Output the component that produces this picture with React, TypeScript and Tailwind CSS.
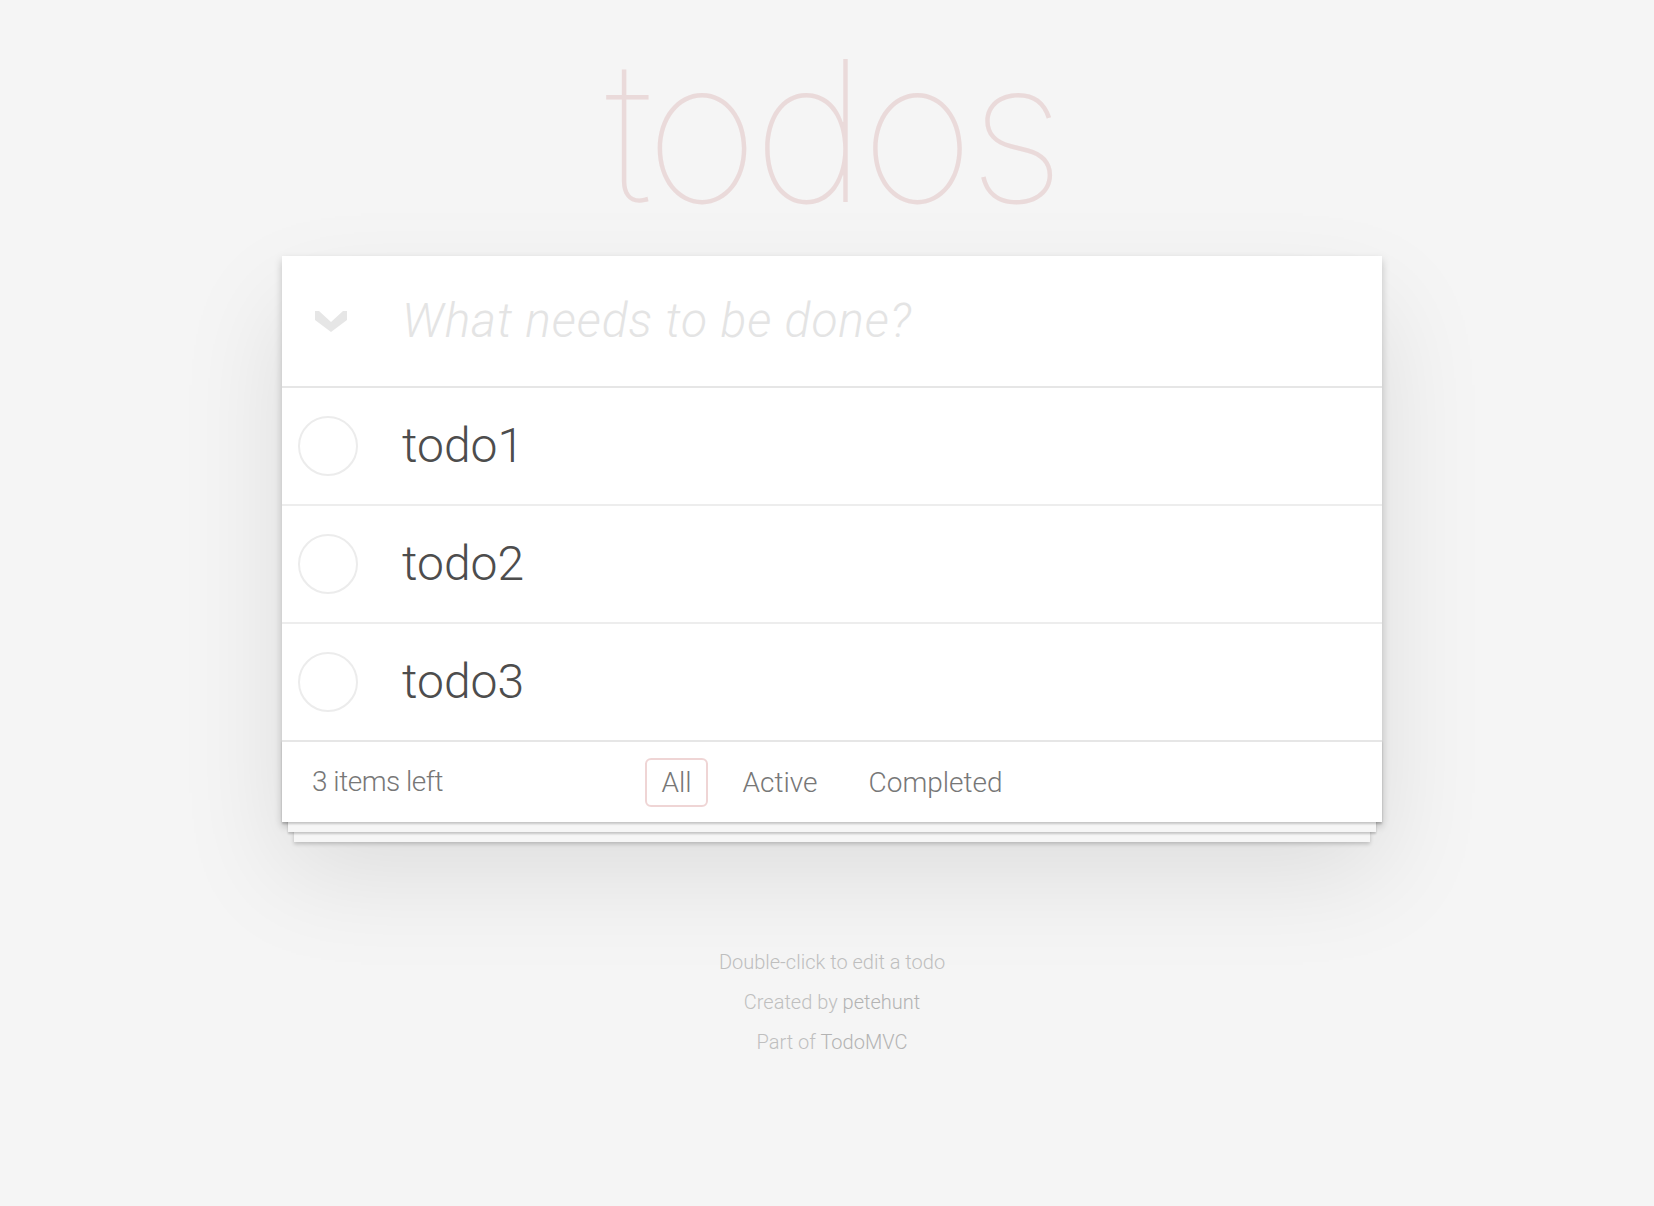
const todos = ["todo1", "todo2", "todo3"];
const filters = ["All", "Active", "Completed"];

function ToggleAll() {
  return (
    <svg width="32" height="21" viewBox="0 0 32 21" className="block">
      <polygon points="0,0 4,0 16,11 28,0 32,0 32,9 16,21 0,9" fill="#e6e6e6" />
    </svg>
  );
}

function Circle() {
  return (
    <svg width="60" height="60" viewBox="0 0 60 60" className="block shrink-0">
      <circle cx="30" cy="30" r="29" fill="none" stroke="#ececec" strokeWidth="2" />
    </svg>
  );
}

export default function App() {
  return (
    <div className="min-h-screen bg-[#f5f5f5] font-['Roboto','Helvetica_Neue',Arial,sans-serif] font-light text-[#4d4d4d]">
      <div className="ml-[282px] w-[1100px] pt-[33px]">
        <h1 className="h-[196px] text-center font-['Inter',sans-serif] text-[196px] leading-[196px] font-thin tracking-[-6px] text-[#eadada]">
          todos
        </h1>

        <section className="relative mt-[27px] bg-white shadow-[0_4px_8px_0_rgba(0,0,0,0.2),0_50px_100px_0_rgba(0,0,0,0.1)]">
          <header className="flex h-[132px] items-center border-b-2 border-[#e6e6e6]">
            <div className="w-[120px] pl-[33px]">
              <ToggleAll />
            </div>
            <input
              placeholder="What needs to be done?"
              className="flex-1 bg-transparent pr-[32px] text-[48px] italic tracking-[0.9px] outline-none placeholder:text-[#e4e4e4]"
            />
          </header>

          <ul>
            {todos.map((t, i) => (
              <li
                key={t}
                className={`flex items-center ${i < todos.length - 1 ? "h-[118px] border-b-2 border-[#ededed]" : "h-[116px]"}`}
              >
                <div className="w-[120px] pl-[16px]">
                  <Circle />
                </div>
                <label className="text-[48px] leading-[1.2] text-[#4d4d4d]">{t}</label>
              </li>
            ))}
          </ul>

          <footer className="relative flex h-[82px] items-center border-t-2 border-[#e6e6e6] px-[30px] text-[28px] text-[#777] shadow-[0_2px_2px_rgba(0,0,0,0.2),0_16px_0_-6px_#f6f6f6,0_18px_2px_-6px_rgba(0,0,0,0.2),0_32px_0_-12px_#f6f6f6,0_34px_4px_-12px_rgba(0,0,0,0.2)]">
            <span className="tracking-[-0.5px]">3 items left</span>
            <ul className="absolute inset-x-0 flex justify-center gap-[7px]">
              {filters.map(f => (
                <li key={f} className="mx-[6px]">
                  <a
                    className={`block rounded-[6px] border-2 px-[14px] py-[6px] leading-[33px] ${
                      f === "All" ? "border-[rgba(175,47,47,0.2)]" : "border-transparent"
                    }`}
                  >
                    {f}
                  </a>
                </li>
              ))}
            </ul>
          </footer>
        </section>

        <div className="mt-[130px] flex flex-col items-center gap-[20px] text-[20px] leading-none text-[#bfbfbf]">
          <p>Double-click to edit a todo</p>
          <p>
            Created by <a className="text-[#b3b3b3]">petehunt</a>
          </p>
          <p>
            Part of <a className="text-[#b3b3b3]">TodoMVC</a>
          </p>
        </div>
      </div>
    </div>
  );
}
